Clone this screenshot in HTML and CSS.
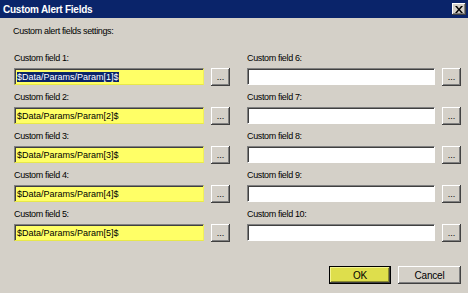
FILE: index.html
```html
<!DOCTYPE html>
<html lang="en">
<head>
    <meta charset="UTF-8">
    <title>Custom Alert Fields</title>
    <link rel="stylesheet" href="styles.css">
</head>
<body>
    <div class="window">
        <div class="titlebar">
            <span class="title">Custom Alert Fields</span>
            <button class="close-btn" aria-label="Close">
                <svg width="8" height="7" viewBox="0 0 8 7">
                    <path d="M0 0h2l2 2.5L6 0h2L5 3.5 8 7H6L4 4.5 2 7H0l3-3.5z" fill="#000"/>
                </svg>
            </button>
        </div>

        <div class="content">
            <div class="intro">Custom alert fields settings:</div>

            <div class="fields">
                <div class="column">
                    <div class="field">
                        <label>Custom field 1:</label>
                        <div class="field-row">
                            <div class="input filled"><span class="selected">$Data/Params/Param[1]$</span></div>
                            <button class="dots-btn">...</button>
                        </div>
                    </div>
                    <div class="field">
                        <label>Custom field 2:</label>
                        <div class="field-row">
                            <div class="input filled">$Data/Params/Param[2]$</div>
                            <button class="dots-btn">...</button>
                        </div>
                    </div>
                    <div class="field">
                        <label>Custom field 3:</label>
                        <div class="field-row">
                            <div class="input filled">$Data/Params/Param[3]$</div>
                            <button class="dots-btn">...</button>
                        </div>
                    </div>
                    <div class="field">
                        <label>Custom field 4:</label>
                        <div class="field-row">
                            <div class="input filled">$Data/Params/Param[4]$</div>
                            <button class="dots-btn">...</button>
                        </div>
                    </div>
                    <div class="field">
                        <label>Custom field 5:</label>
                        <div class="field-row">
                            <div class="input filled">$Data/Params/Param[5]$</div>
                            <button class="dots-btn">...</button>
                        </div>
                    </div>
                </div>

                <div class="column">
                    <div class="field">
                        <label>Custom field 6:</label>
                        <div class="field-row">
                            <div class="input"></div>
                            <button class="dots-btn">...</button>
                        </div>
                    </div>
                    <div class="field">
                        <label>Custom field 7:</label>
                        <div class="field-row">
                            <div class="input"></div>
                            <button class="dots-btn">...</button>
                        </div>
                    </div>
                    <div class="field">
                        <label>Custom field 8:</label>
                        <div class="field-row">
                            <div class="input"></div>
                            <button class="dots-btn">...</button>
                        </div>
                    </div>
                    <div class="field">
                        <label>Custom field 9:</label>
                        <div class="field-row">
                            <div class="input"></div>
                            <button class="dots-btn">...</button>
                        </div>
                    </div>
                    <div class="field">
                        <label>Custom field 10:</label>
                        <div class="field-row">
                            <div class="input"></div>
                            <button class="dots-btn">...</button>
                        </div>
                    </div>
                </div>
            </div>

            <div class="footer">
                <button class="button default">OK</button>
                <button class="button">Cancel</button>
            </div>
        </div>
    </div>
</body>
</html>
```

FILE: styles.css
```css
* {
    margin: 0;
    padding: 0;
    box-sizing: border-box;
}

body {
    font-family: "Liberation Sans", Arial, sans-serif;
    font-size: 9px;
    color: #000;
    background: #d4d0c8;
}

.window {
    width: 468px;
    height: 293px;
    background: #d4d0c8;
}

.titlebar {
    height: 18px;
    background: #0a246a;
    display: flex;
    align-items: center;
    justify-content: space-between;
    padding: 0 2px 0 3px;
}

.title {
    color: #fff;
    font-weight: bold;
    font-size: 10px;
    letter-spacing: -0.25px;
}

.close-btn {
    width: 14px;
    height: 12px;
    background: #d4d0c8;
    border: none;
    box-shadow: inset -1px -1px #404040, inset 1px 1px #fff, inset -2px -2px #808080;
    display: flex;
    align-items: center;
    justify-content: center;
}

.content {
    padding: 7px 7px 0 14px;
}

.intro {
    line-height: 13px;
    letter-spacing: -0.35px;
    margin-left: -1px;
    margin-bottom: 14px;
}

.fields {
    display: grid;
    grid-template-columns: 216px 214px;
    column-gap: 17px;
}

.column {
    display: flex;
    flex-direction: column;
    gap: 5px;
}

.field label {
    display: block;
    line-height: 13px;
    letter-spacing: -0.35px;
    margin-bottom: 3px;
}

.field-row {
    display: flex;
    gap: 7px;
}

.input {
    flex: 1;
    height: 17px;
    background: #fff;
    border-top: 1px solid #808080;
    border-left: 1px solid #808080;
    border-right: 1px solid #fff;
    border-bottom: 1px solid #fff;
    box-shadow: inset 1px 1px #404040;
    padding: 2px 0 0 2px;
    line-height: 12px;
    white-space: nowrap;
    overflow: hidden;
}

.input.filled {
    background: #ffff66;
    border-right-color: #f0f05a;
    border-bottom-color: #e8e84a;
}

.selected {
    background: #0a246a;
    color: #fff;
}

.dots-btn {
    width: 19px;
    height: 18px;
    background: #d4d0c8;
    border: none;
    box-shadow: inset -1px -1px #404040, inset 1px 1px #fff, inset -2px -2px #808080;
    font-family: "Liberation Sans", Arial, sans-serif;
    font-size: 9px;
    line-height: 1;
    display: flex;
    align-items: flex-end;
    justify-content: center;
    padding-bottom: 4px;
}

.footer {
    display: flex;
    justify-content: flex-end;
    gap: 7px;
    margin-top: 24px;
}

.button {
    width: 63px;
    height: 18px;
    background: #d4d0c8;
    border: none;
    box-shadow: inset -1px -1px #404040, inset 1px 1px #fff, inset -2px -2px #808080;
    font-family: "Liberation Sans", Arial, sans-serif;
    font-size: 10px;
    letter-spacing: -0.2px;
}

.button.default {
    width: 62px;
    background: #dede4c;
    box-shadow: inset 0 0 0 1px #000, inset -2px -2px #404040, inset 2px 2px #f4f490, inset -3px -3px #8a8a30;
}
```
